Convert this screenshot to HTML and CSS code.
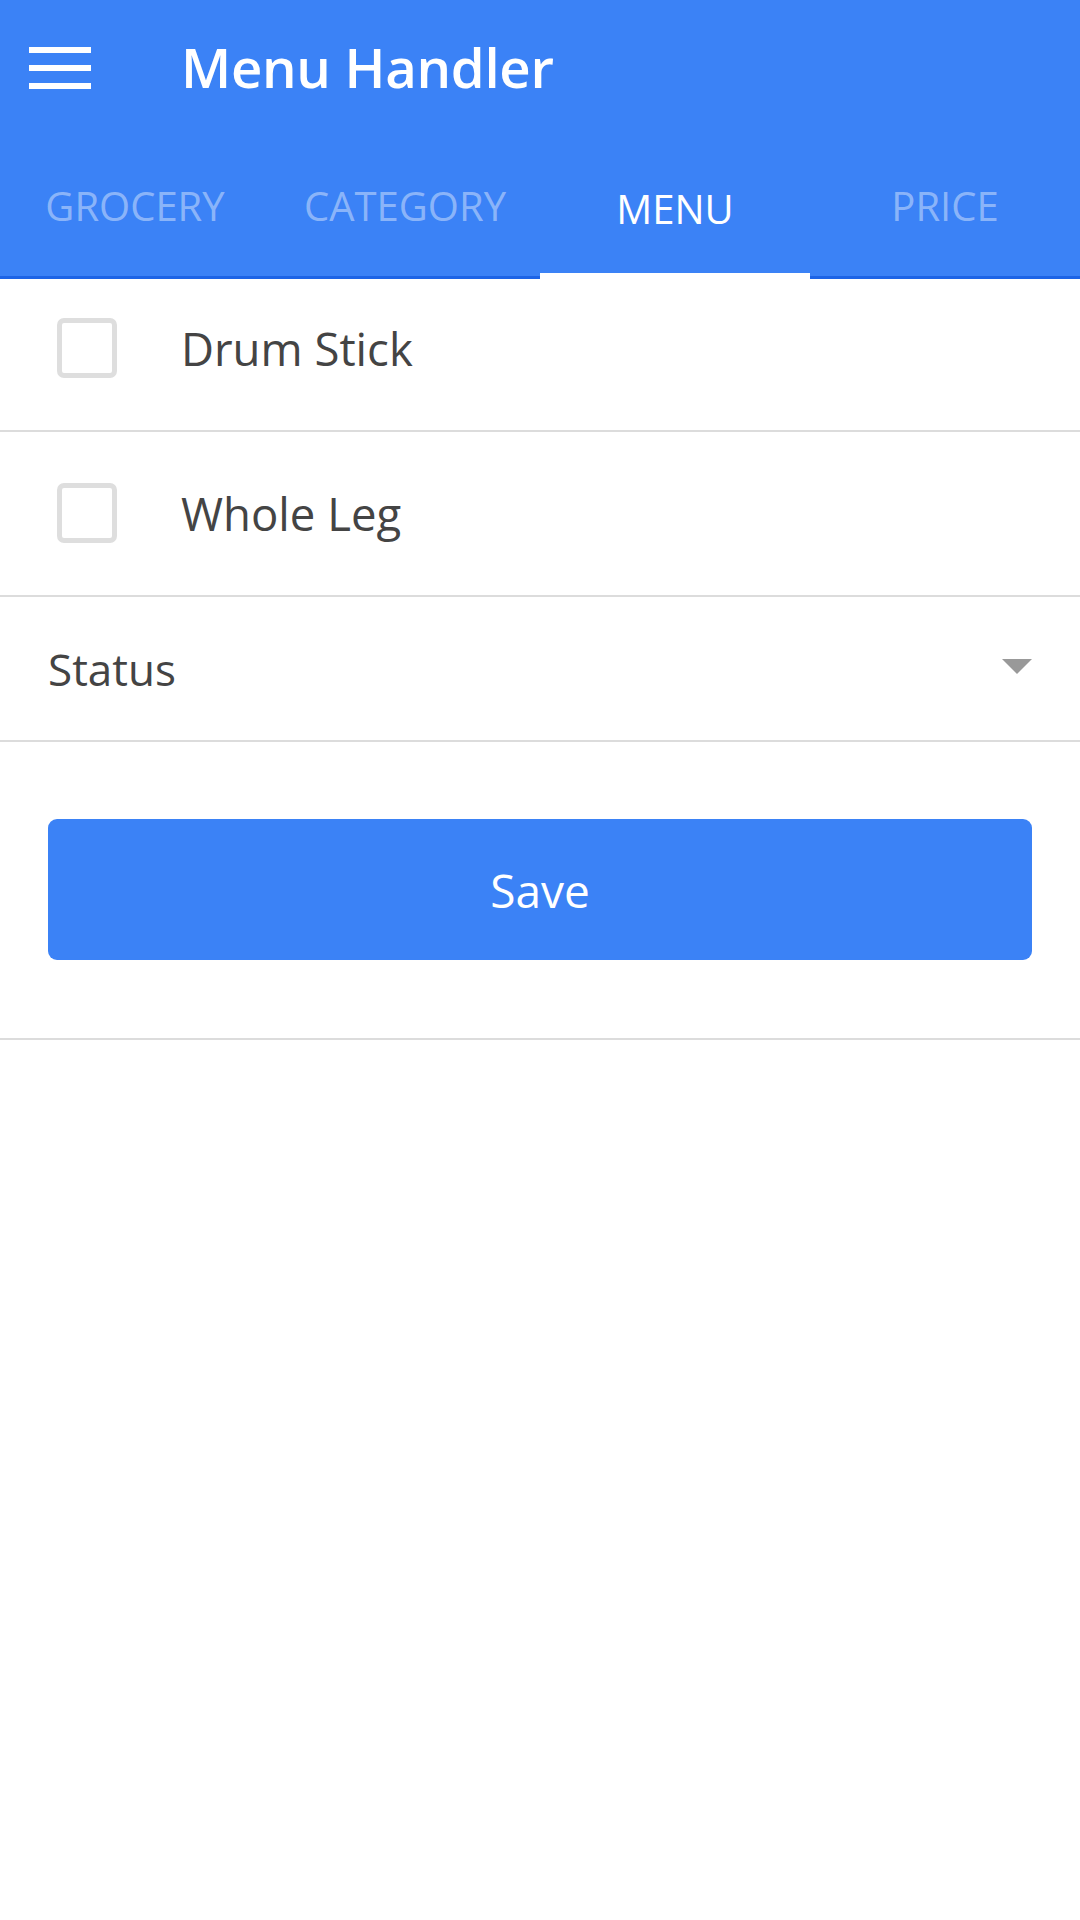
FILE: index.html
```html
<!DOCTYPE html>
<html>
<head>
<meta charset="utf-8">
<link rel="stylesheet" href="styles.css">
</head>
<body>
<div class="app">
  <header class="header">
    <div class="toolbar">
      <button class="hamburger" aria-label="Menu">
        <svg width="62" height="42" viewBox="0 0 62 42"><rect x="0" y="0" width="62" height="6" fill="#fff"/><rect x="0" y="18" width="62" height="6" fill="#fff"/><rect x="0" y="36" width="62" height="6" fill="#fff"/></svg>
      </button>
      <h1 class="title">Menu Handler</h1>
    </div>
    <nav class="tabs">
      <div class="tab">GROCERY</div>
      <div class="tab">CATEGORY</div>
      <div class="tab active">MENU</div>
      <div class="tab">PRICE</div>
    </nav>
  </header>
  <main class="content">
    <div class="row row-first">
      <span class="checkbox"></span>
      <span class="label">Drum Stick</span>
    </div>
    <div class="row row-second">
      <span class="checkbox"></span>
      <span class="label">Whole Leg</span>
    </div>
    <div class="select-row">
      <span class="select-label">Status</span>
      <svg class="caret" width="30" height="15" viewBox="0 0 30 15"><polygon points="0,0 30,0 15,15" fill="#999"/></svg>
    </div>
    <div class="actions">
      <button class="save">Save</button>
    </div>
  </main>
</div>
</body>
</html>
```
FILE: styles.css
```css
* { box-sizing: border-box; }
html, body { margin: 0; padding: 0; background: #fff; }
body { font-family: "Open Sans", "Noto Sans", sans-serif; width: 1080px; }

.header { background: #3b82f6; }
.toolbar { height: 140px; display: flex; align-items: center; }
.hamburger {
  background: none; border: 0; padding: 0; margin: 0 0 0 29px;
  width: 62px; height: 42px; display: block; margin-top: -4px;
}
.hamburger svg { display: block; }
.title {
  margin: 0 0 0 90px; color: #fff; font-size: 54.5px; font-weight: 600;
  letter-spacing: -0.3px; line-height: 1; margin-top: -6px;
}
.tabs { display: grid; grid-template-columns: repeat(4, 1fr); height: 139px; border-bottom: 3px solid #1d64e6; }
.tab {
  position: relative; display: flex; align-items: center; justify-content: center;
  font-size: 40px; color: rgba(255,255,255,0.42); padding-bottom: 6px;
}
.tab.active { color: #fff; padding-top: 0; padding-bottom: 0; }
.tab.active::after {
  content: ""; position: absolute; left: 0; right: 0; bottom: -3px; height: 6px; background: #fff;
}

.row { display: flex; align-items: center; border-bottom: 2px solid #dcdcdc; }
.row-first { padding: 39px 0 52px; }
.row-second { padding: 51px 0 52px; }
.checkbox {
  width: 60px; height: 60px; border: 5px solid #dedede; border-radius: 7px; margin-left: 57px; flex: none;
}
.label { margin-left: 64px; font-size: 45.5px; color: #444; line-height: 60px; }

.select-row {
  display: flex; align-items: center; justify-content: space-between; height: 145px;
  border-bottom: 2px solid #dcdcdc; padding: 0 48px 0 48px;
}
.select-label { font-size: 44px; color: #444; }
.caret { display: block; margin-right: 0; margin-top: -4px; }

.actions { padding: 77px 48px 78px; border-bottom: 2px solid #dcdcdc; }
.save {
  display: block; width: 100%; height: 141px; border: 0; border-radius: 9px;
  background: #3b82f6; color: #fff; font-family: inherit; font-size: 46px;
}
```
